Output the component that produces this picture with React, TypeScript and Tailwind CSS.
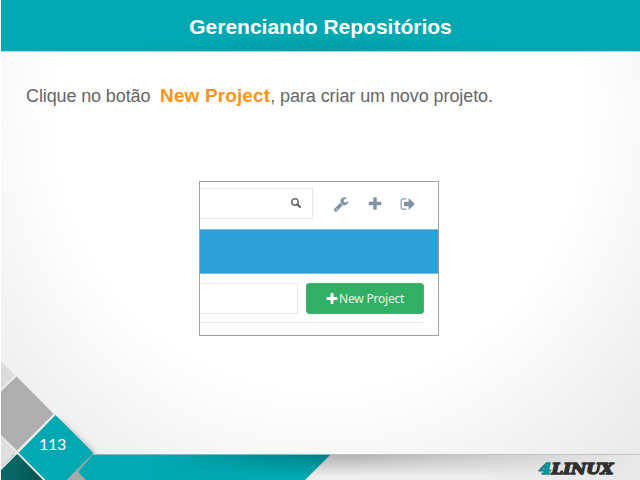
import React from "react";

type GlyphProps = { d: string; className: string };

function Glyph({ d, className }: GlyphProps) {
  return (
    <svg viewBox="0 0 1792 1792" fill="currentColor" className={className}>
      <path d={d} />
    </svg>
  );
}

const PLUS =
  "M1600 736v192q0 40-28 68t-68 28h-416v416q0 40-28 68t-68 28h-192q-40 0-68-28t-28-68v-416h-416q-40 0-68-28t-28-68v-192q0-40 28-68t68-28h416v-416q0-40 28-68t68-28h192q40 0 68 28t28 68v416h416q40 0 68 28t28 68z";
const WRENCH =
  "M448 1472q0-26-19-45t-45-19-45 19-19 45 19 45 45 19 45-19 19-45zm644-420l-682 682q-37 37-90 37-52 0-91-37l-106-108q-38-36-38-90 0-53 38-91l681-681q39 98 114.500 173.500t173.500 114.500zm634-435q0 39-23 106-47 134-164.500 217.500t-258.500 83.500q-185 0-316.500-131.500t-131.500-316.500 131.500-316.500 316.500-131.500q58 0 121.500 16.500t107.500 46.500q16 11 16 28t-16 28l-293 169v224l193 107q5-3 79-48.500t135.500-81 70.500-35.500q15 0 23.500 10t8.500 25z";
const SIGN_OUT =
  "M704 1440q0 4 1 20t.5 26.500-3 23.500-10 19.500-20.500 6.500h-320q-119 0-203.500-84.500t-84.500-203.500v-704q0-119 84.500-203.500t203.500-84.500h320q13 0 22.500 9.500t9.500 22.500q0 4 1 20t.5 26.500-3 23.500-10 19.500-20.500 6.500h-320q-66 0-113 47t-47 113v704q0 66 47 113t113 47h312l11.500 1 11.500 3 8 5.500 7 9 2 13.500zm928-544q0 26-19 45l-544 544q-19 19-45 19t-45-19-19-45v-288h-448q-26 0-45-19t-19-45v-384q0-26 19-45t45-19h448v-288q0-26 19-45t45-19 45 19l544 544q19 19 19 45z";

function ProjectPanel() {
  return (
    <div className="ml-[198px] mt-[72px] flex h-[155px] w-[240px] flex-col border border-[#a0a0a0] bg-white">
      <div className="flex h-[47px] shrink-0 pt-[6px]">
        <div className="flex h-[31px] w-[113px] items-center justify-end border border-l-0 border-[#e8e8e8] pr-[11px]">
          <svg viewBox="0 0 10 10" className="mb-px size-[10px]" fill="none" stroke="#6c6c6c">
            <circle cx="4" cy="4" r="3.2" strokeWidth="1.500" />
            <path d="M6.4 6.4 9 9" strokeWidth="2.200" strokeLinecap="round" />
          </svg>
        </div>
        <div className="flex h-[32px] items-center pl-[20px] text-[#8293a9]">
          <Glyph d={WRENCH} className="size-4" />
          <Glyph d={PLUS} className="ml-[18px] size-4" />
          <Glyph d={SIGN_OUT} className="ml-[17px] size-4" />
        </div>
      </div>
      <div className="h-[45px] shrink-0 border-y border-[#7fc1e6] bg-[#2d9fd9]" />
      <div className="mr-[14px] flex h-[49px] shrink-0 justify-between border-b border-[#e8e8e8] pt-[9px]">
        <div className="h-[31px] w-[98px] border border-l-0 border-[#e8e8e8]" />
        <div className="flex h-[31px] w-[118px] items-center rounded-[3px] border border-[#44b672] bg-[#31af64] pl-[18px] text-white">
          <Glyph d={PLUS} className="size-[14px]" />
          <span className="whitespace-nowrap font-['Noto_Sans',sans-serif] text-[12px] leading-none tracking-[-0.2px] text-[#e9f7ee]">
            New Project
          </span>
        </div>
      </div>
    </div>
  );
}

function Artwork() {
  return (
    <svg viewBox="0 350 340 130" className="absolute bottom-0 left-0 h-[130px] w-[340px]">
      <defs>
        <linearGradient id="bar" x1="0" y1="0" x2="0" y2="1">
          <stop offset="0" stopColor="#007d82" />
          <stop offset="0.85" stopColor="#00a9b1" />
        </linearGradient>
        <linearGradient id="barFade" x1="0" y1="0" x2="1" y2="0">
          <stop offset="0.3" stopColor="#00a9b1" />
          <stop offset="1" stopColor="#00a9b1" stopOpacity="0" />
        </linearGradient>
        <linearGradient id="dark" x1="0" y1="0" x2="1" y2="0">
          <stop offset="0.3" stopColor="#056866" />
          <stop offset="1" stopColor="#034f4c" />
        </linearGradient>
        <filter id="soft" x="-30%" y="-30%" width="160%" height="160%">
          <feGaussianBlur stdDeviation="3" />
        </filter>
      </defs>
      <path d="M1 361 15.500 375 1 389.500Z" fill="#dcdcdc" />
      <path d="M1 361 15.500 375 1 389.500" fill="none" stroke="#f1f1f1" strokeWidth="0.6" />
      <path d="M1 436 16 452 1 467Z" fill="#dfdfdf" />
      <path d="M59 420 95 454 68 484 50 480Z" fill="#777" opacity="0.6" filter="url(#soft)" />
      <path d="M17 376 54 413.500 17 450.500 1 435V391.500Z" fill="#aeaeae" />
      <path d="M1 470 17 454 43 480H1Z" fill="url(#dark)" />
      <path d="M93.500 454.500H330.500L305 480H85.500L77.500 472Z" fill="url(#bar)" />
      <path d="M93.500 454.500H330.500L305 480H85.500L77.500 472Z" fill="url(#barFade)" />
      <path d="M92 454.500H330" stroke="#7dbdc0" strokeWidth="1" />
      <path d="M66 480.500 93.500 453 78 471.500 86 480.500Z" fill="#a5a9a9" />
      <path d="M55.500 415 93.500 453 66 480.500H45.500L18 453Z" fill="#00a9b1" />
      <path d="M16 375 55 414.300 17.500 452.500 45 480.500" fill="none" stroke="#efefef" strokeWidth="1.300" />
      <path d="M55 414.300 17.500 452.500 1 469" fill="none" stroke="#ececec" strokeWidth="1.300" />
    </svg>
  );
}

export default function App() {
  return (
    <div className="relative h-[480px] w-[640px] overflow-hidden bg-white pl-px font-['Liberation_Sans',Arial,sans-serif]">
      <div className="flex h-full flex-col bg-[radial-gradient(ellipse_400px_420px_at_319px_110px,#fff_0%,#fff_66%,#f5f5f5_88%,#ebebeb_110%,#e2e2e2_130%)]">
        <header className="flex h-[52px] shrink-0 items-center justify-center border-b border-[#a5dde1] bg-[#00a9b1] bg-[radial-gradient(ellipse_180px_17px_at_319px_52px,#009aa2_0%,#00a9b1_100%)] pt-[2px]">
          <h1 className="text-[21px] font-bold leading-none text-white">Gerenciando Repositórios</h1>
        </header>
        <main className="grow">
          <p className="whitespace-pre pl-[25px] pt-[31px] text-[18px] leading-[25px] tracking-[-0.12px] text-[#666]">
            {"Clique no botão  "}
            <b className="text-[19px] tracking-[0.12px] text-[#ff9314]">New Project</b>
            <span className="tracking-[-0.08px]">, para criar um novo projeto.</span>
          </p>
          <ProjectPanel />
        </main>
        <footer className="flex h-[26px] shrink-0 justify-end border-t border-[#c4c4c4] bg-[linear-gradient(to_right,transparent_55%,#e9e9e9_100%),linear-gradient(to_bottom,#b2b2b2,#eee_85%)] bg-[#eee] pr-[22px] pt-[5px]">
          <svg viewBox="0 0 80 18" className="h-[18px] w-20">
            <g fontFamily="'DejaVu Serif', serif" fontWeight="bold" fontStyle="italic" fontSize="14" strokeLinejoin="round">
              <text x="1" y="13.500" textLength="12.500" lengthAdjust="spacingAndGlyphs" fill="#00a6ae" stroke="#0b8a90" strokeWidth="1.300">
                4
              </text>
              <text x="13.500" y="13.500" textLength="62" lengthAdjust="spacingAndGlyphs" fill="#303030" stroke="#303030" strokeWidth="1.400">
                LINUX
              </text>
            </g>
          </svg>
        </footer>
      </div>
      <Artwork />
      <span className="absolute left-[39px] top-[434px] font-['Lato',sans-serif] text-[16px] leading-[20px] tracking-[-0.3px] text-white">113</span>
    </div>
  );
}
